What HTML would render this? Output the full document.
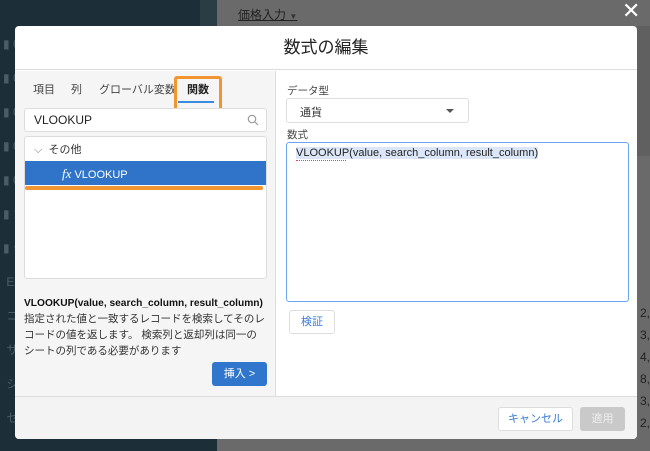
<!DOCTYPE html>
<html><head><meta charset="utf-8"><style>
*{box-sizing:border-box;margin:0;padding:0}
body{width:650px;height:451px;overflow:hidden;position:relative;background:#1c2f39;font-family:"Liberation Sans","Noto Sans CJK JP",sans-serif;color:#333}
.abs{position:absolute}
.t{font-size:11px;white-space:nowrap}
</style></head><body>
<div class="abs" style="left:217px;top:0;width:433px;height:451px;background:#6a6a6a"></div>
<div class="abs" style="left:200px;top:0;width:17px;height:26px;background:#2a3d45"></div>
<div class="abs t" style="left:238px;top:6px;font-size:12px;color:#222;text-decoration:underline">価格入力 <span style="font-size:8px;color:#333">▼</span></div>
<div class="abs" style="left:637px;top:26px;width:13px;height:130px;background:#606060"></div>
<div class="abs t" style="left:640px;top:302px;color:#222;line-height:22px;font-size:12px">2,<br>3,<br>4,<br>8,<br>3,<br>2,</div>
<div class="abs" style="left:622px;top:-2px;color:#fff;font-size:22px">✕</div>
<div class="abs t" style="left:3px;top:27px;color:#4b5c64;line-height:34px;font-size:12px">▮ 00<br>▮ 04<br>▮ 06<br>▮ 07<br>▮ 09<br>▮ カ<br>▮ デ<br>&nbsp;Ex<br>&nbsp;コ<br>&nbsp;サ<br>&nbsp;シ<br>&nbsp;セ</div>

<div class="abs" style="left:15px;top:26px;width:622px;height:413px;background:#fff;border-radius:4px;overflow:hidden">
 <div class="abs" style="left:0;top:0;width:622px;height:44px;border-bottom:1px solid #ddd;text-align:center;line-height:44px;font-size:17px;color:#222">数式の編集</div>
 <div class="abs" style="left:0;top:45px;width:261px;height:325px;background:#f5f5f5;border-right:1px solid #ddd"></div>
 <div class="abs t" style="left:18px;top:55px;font-size:11px;color:#444">項目</div>
 <div class="abs t" style="left:56px;top:55px;color:#444">列</div>
 <div class="abs t" style="left:84px;top:55px;color:#444">グローバル変数</div>
 <div class="abs t" style="left:172px;top:55px;color:#222;font-weight:bold">関数</div>
 <div class="abs" style="left:9px;top:99px;width:243px;height:1px;background:#ddd"></div>
 <div class="abs" style="left:163px;top:75px;width:36px;height:2px;background:#3b8be0"></div>
 <div class="abs" style="left:159px;top:50px;width:48px;height:35px;border:3px solid #f0952f;border-radius:3px"></div>
 <div class="abs" style="left:9px;top:82px;width:243px;height:24px;background:#fff;border:1px solid #ddd;border-radius:3px"></div>
 <div class="abs t" style="left:19px;top:87px;font-size:12px;color:#222">VLOOKUP</div>
 <svg class="abs" style="left:232px;top:88px" width="12" height="12"><circle cx="5" cy="5" r="3.7" fill="none" stroke="#999" stroke-width="1.2"/><path d="M8 8l3 3" stroke="#999" stroke-width="1.2"/></svg>
 <div class="abs" style="left:9px;top:110px;width:243px;height:143px;background:#fff;border:1px solid #ddd;border-radius:3px"></div>
 <div class="abs t" style="left:19px;top:115px;color:#333;font-size:11px"><span style="color:#777">⌵</span>&nbsp; その他</div>
 <div class="abs" style="left:10px;top:135px;width:241px;height:24px;background:#2f74c8"></div>
 <div class="abs t" style="left:47px;top:140px;color:#fff;font-size:11px"><i style="font-family:'Liberation Serif',serif;font-size:13px">fx</i> VLOOKUP</div>
 <div class="abs" style="left:10px;top:160px;width:238px;height:4px;background:#f0952f;border-radius:2px"></div>
 <div class="abs t" style="left:9px;top:272px;font-size:10.2px;color:#111;font-weight:bold">VLOOKUP(value, search_column, result_column)</div>
 <div class="abs" style="left:9px;top:285px;width:242px;font-size:10.5px;line-height:16px;color:#333">指定された値と一致するレコードを検索してそのレコードの値を返します。 検索列と返却列は同一のシートの列である必要があります</div>
 <div class="abs" style="left:197px;top:336px;width:55px;height:24px;background:#3076cc;border-radius:3px;color:#fff;font-size:11px;text-align:center;line-height:24px">挿入 &gt;</div>

 <div class="abs t" style="left:272px;top:57px;color:#444;font-size:10.5px">データ型</div>
 <div class="abs" style="left:271px;top:72px;width:183px;height:25px;border:1px solid #ddd;border-radius:3px"></div>
 <div class="abs t" style="left:285px;top:78px;color:#333">通貨</div>
 <div class="abs" style="left:431px;top:83px;border-left:4px solid transparent;border-right:4px solid transparent;border-top:4px solid #555"></div>
 <div class="abs t" style="left:272px;top:101px;color:#444;font-size:10.5px">数式</div>
 <div class="abs" style="left:271px;top:116px;width:343px;height:160px;border:1.5px solid #6aa6f0;border-radius:3px"></div>
 <div class="abs t" style="left:281px;top:121px;font-size:11px;color:#222;background:#dbe7f8">VLOOKUP(value, search_column, result_column)</div>
 <div class="abs" style="left:281px;top:134px;width:50px;border-top:1px dotted #e44"></div>
 <div class="abs" style="left:274px;top:284px;width:46px;height:24px;border:1px solid #ddd;border-radius:3px;text-align:center;line-height:22px;font-size:11px;color:#3a7bd5">検証</div>

 <div class="abs" style="left:0;top:370px;width:622px;height:43px;background:#f3f3f3;border-top:1px solid #ddd"></div>
 <div class="abs" style="left:483px;top:381px;width:75px;height:24px;background:#fff;border:1px solid #ddd;border-radius:3px;text-align:center;line-height:22px;font-size:11px;color:#3a7bd5">キャンセル</div>
 <div class="abs" style="left:565px;top:381px;width:45px;height:24px;background:#c9c9c9;border-radius:3px;text-align:center;line-height:24px;font-size:11px;color:#eee">適用</div>
</div>
</body></html>
